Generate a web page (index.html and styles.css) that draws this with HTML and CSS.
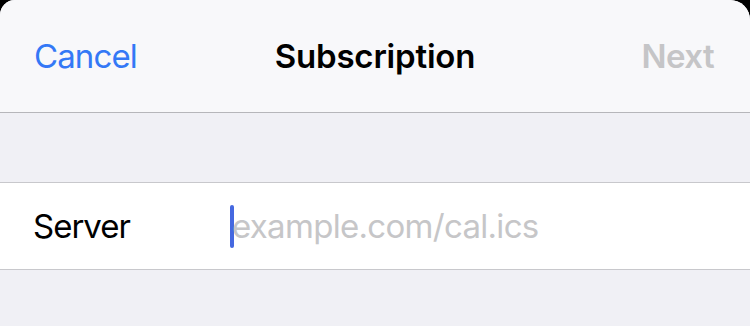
FILE: index.html
```html
<!DOCTYPE html>
<html lang="en">
<head>
    <meta charset="UTF-8">
    <meta name="viewport" content="width=device-width, initial-scale=1.0">
    <title>Subscription</title>
    <link rel="stylesheet" href="styles.css">
</head>
<body>
    <div class="sheet">
        <div class="navbar">
            <span class="nav-btn cancel">Cancel</span>
            <span class="nav-title">Subscription</span>
            <span class="nav-btn next">Next</span>
        </div>

        <div class="group">
            <div class="row">
                <span class="row-label">Server</span>
                <div class="row-field">
                    <span class="cursor"></span>
                    <span class="placeholder">example.com/cal.ics</span>
                </div>
            </div>
        </div>
    </div>
</body>
</html>
```

FILE: styles.css
```css
html, body {
    margin: 0;
    padding: 0;
    background: #000;
}

body {
    width: 750px;
    height: 326px;
    overflow: hidden;
    font-family: Inter, "Liberation Sans", sans-serif;
}

.sheet {
    height: 326px;
    background: #f0f0f5;
    border-radius: 15px 20px 0 0;
    overflow: hidden;
}

.navbar {
    height: 112px;
    background: #f8f8fa;
    border-bottom: 1px solid #b6b6ba;
    display: flex;
    align-items: center;
    justify-content: space-between;
    padding: 0 36px 0 34px;
    position: relative;
}

.nav-btn {
    font-size: 33px;
    letter-spacing: -0.9px;
}

.cancel {
    color: #3478f6;
}

.next {
    color: #c5c5c7;
    font-weight: 600;
    letter-spacing: -0.6px;
}

.nav-title {
    position: absolute;
    left: 0;
    right: 0;
    text-align: center;
    font-size: 33px;
    font-weight: 600;
    letter-spacing: -0.2px;
    color: #000;
}

.group {
    margin-top: 69px;
    background: #fff;
    border-top: 1px solid #c8c8cc;
    border-bottom: 1px solid #c8c8cc;
}

.row {
    height: 86px;
    display: flex;
    align-items: center;
    padding-left: 33px;
}

.row-label {
    width: 197px;
    font-size: 33px;
    letter-spacing: -1px;
    color: #000;
}

.row-field {
    display: flex;
    align-items: center;
    font-size: 33px;
    letter-spacing: -0.7px;
}

.cursor {
    width: 4px;
    height: 43px;
    border-radius: 2px;
    background: #4568e0;
    margin-right: -2px;
}

.placeholder {
    color: #c6c6c8;
}
```
